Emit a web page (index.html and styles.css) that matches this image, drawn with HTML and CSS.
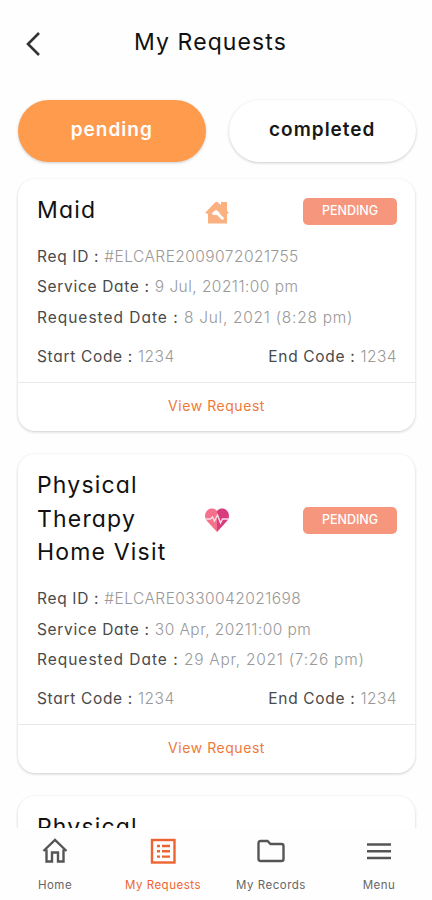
FILE: index.html
```html
<!DOCTYPE html>
<html lang="en">
<head>
  <meta charset="UTF-8" />
  <meta name="viewport" content="width=device-width, initial-scale=1.0" />
  <title>My Requests</title>
  <link rel="stylesheet" href="styles.css">
</head>
<body>
  <header class="header">
    <svg class="back" width="16" height="26" viewBox="0 0 16 26"><path d="M14 2 3 13 14 24" /></svg>
    <h1>My Requests</h1>
  </header>

  <div class="tabs">
    <button class="tab active">pending</button>
    <button class="tab">completed</button>
  </div>

  <main class="list">
    <div class="card">
      <div class="card-head">
        <h2>Maid</h2>
        <svg width="26" height="26" viewBox="0 0 26 26">
          <path fill="#fbb080" d="M1 14 11 3.5q1.500-1.500 3 0L17 6V3h6v9l2 2-2 1v9.500H4V15Z" />
          <path fill="#fff" d="M9 13l3-2 3 2 1 2 4 4-1 2-2-1-4-4H9l-1-2Z" />
        </svg>
        <span class="badge">PENDING</span>
      </div>
      <p>Req ID : <span>#ELCARE2009072021755</span></p>
      <p>Service Date : <span>9 Jul, 20211:00 pm</span></p>
      <p class="requested">Requested Date : <span>8 Jul, 2021 (8:28 pm)</span></p>
      <div class="codes">
        <p>Start Code : <span>1234</span></p>
        <p>End Code : <span>1234</span></p>
      </div>
      <a class="view" href="#">View Request</a>
    </div>

    <div class="card">
      <div class="card-head">
        <h2>Physical Therapy Home Visit</h2>
        <svg width="26" height="26" viewBox="0 0 26 26">
          <path fill="#f5708a" d="M13 25 3 14C-3 7 6-3 13 4Z" />
          <path fill="#d83c7c" d="M13 25 23 14C29 7 20-3 13 4Z" />
          <path fill="none" stroke="#f9dce6" stroke-width="1.500" d="M1.500 12h5l2-2 2 4 3-6 3 8 2-4h6" />
        </svg>
        <span class="badge">PENDING</span>
      </div>
      <p>Req ID : <span>#ELCARE0330042021698</span></p>
      <p>Service Date : <span>30 Apr, 20211:00 pm</span></p>
      <p class="requested">Requested Date : <span>29 Apr, 2021 (7:26 pm)</span></p>
      <div class="codes">
        <p>Start Code : <span>1234</span></p>
        <p>End Code : <span>1234</span></p>
      </div>
      <a class="view" href="#">View Request</a>
    </div>

    <div class="card">
      <div class="card-head">
        <h2>Physical</h2>
      </div>
    </div>
  </main>

  <nav class="nav">
    <a href="#">
      <svg width="28" height="28" viewBox="0 0 28 28"><path d="M2.500 14 14 3 25.500 14M5.500 12.500V24.500H11V15.500H17V24.500H22.500V12.500" /></svg>
      Home
    </a>
    <a href="#" class="active">
      <svg width="28" height="28" viewBox="0 0 28 28">
        <rect x="3" y="3" width="22.500" height="22.500" />
        <path d="M8 9h3M13 9h8M8 14.300h3M13 14.300h8M8 19.600h3M13 19.600h8" />
      </svg>
      My Requests
    </a>
    <a href="#">
      <svg width="28" height="28" viewBox="0 0 28 28"><path d="M1.500 6Q1.500 4 3.500 4H10.500L13.500 7H24.500Q26.500 7 26.500 9V22Q26.500 24 24.500 24H3.500Q1.500 24 1.500 22Z" /></svg>
      My Records
    </a>
    <a href="#">
      <svg width="28" height="28" viewBox="0 0 28 28"><path d="M2 7.500H26M2 14.200H26M2 21H26" /></svg>
      Menu
    </a>
  </nav>
</body>
</html>
```

FILE: styles.css
```css
* {
  box-sizing: border-box;
}
body {
  margin: 0;
  height: 900px;
  display: flex;
  flex-direction: column;
  overflow: hidden;
  background-color: #fefefe;
  color: #111;
  font-family: Inter, "Open Sans", sans-serif;
  font-feature-settings: "cv11";
}
h1, h2, p {
  margin: 0;
  font-weight: 400;
}
svg {
  display: block;
}
.header {
  display: flex;
  align-items: center;
  height: 88px;
  padding-left: 25px;
}
.back {
  fill: none;
  stroke: #333;
  stroke-width: 2.6;
}
h1 {
  width: 153px;
  margin-left: 93px;
  font-size: 23px;
  letter-spacing: 1.100px;
  white-space: nowrap;
  padding-bottom: 4px;
}
.tabs {
  display: flex;
  gap: 23px;
  padding: 12px 16px 0 18px;
}
.tab {
  flex: 1;
  height: 62px;
  padding: 0 0 4px;
  border: 0;
  border-radius: 31px;
  background-color: #fff;
  color: #181818;
  font: 600 19px Inter, sans-serif;
  font-feature-settings: "cv11";
  letter-spacing: 1px;
  box-shadow: 0 1px 3px rgba(0, 0, 0, 0.2);
}
.tab.active {
  background-color: #ff9b4d;
  color: #fff;
}
.list {
  flex: 1;
  min-height: 0;
  overflow: hidden;
  padding: 17px 17px 0 18px;
}
.card {
  margin-bottom: 23px;
  padding-top: 15px;
  border-radius: 17px;
  background-color: #fff;
  box-shadow: 0 1px 3px rgba(0, 0, 0, 0.2);
}
.card-head {
  display: grid;
  grid-template-columns: 136px 1fr 136px;
  align-items: center;
  justify-items: center;
  padding: 0 18px 0 19px;
  margin-bottom: 14px;
}
.card-head svg {
  margin-top: 2px;
}
h2 {
  justify-self: start;
  font-size: 23px;
  line-height: 33.500px;
  letter-spacing: 1.180px;
}
.badge {
  justify-self: end;
  width: 94px;
  height: 27px;
  margin-top: 2px;
  border-radius: 5px;
  background-color: #f6967c;
  color: #fff;
  font-size: 12.500px;
  font-weight: 500;
  line-height: 26px;
  text-align: center;
}
p {
  padding-left: 19px;
  color: #4a4a4a;
  font-size: 15.500px;
  line-height: 30.900px;
  letter-spacing: 0.680px;
  white-space: nowrap;
}
p span {
  color: #999;
  font-weight: 300;
  letter-spacing: 0.450px;
}
.requested {
  letter-spacing: 0.980px;
}
.requested span {
  letter-spacing: 0.720px;
}
.codes {
  display: flex;
  justify-content: space-between;
  padding-right: 18px;
  margin: 8px 0 9px;
}
.view {
  display: block;
  height: 49px;
  border-top: 1px solid #e8e8e8;
  color: #ee7a3a;
  font-size: 14px;
  line-height: 46px;
  letter-spacing: 0.550px;
  text-align: center;
  text-decoration: none;
}
.nav {
  display: grid;
  grid-template-columns: repeat(4, 108px);
  height: 72px;
  padding: 9px 0 0 1px;
}
.nav a {
  display: flex;
  flex-direction: column;
  align-items: center;
  gap: 12px;
  color: #666;
  font-size: 11.500px;
  line-height: 16px;
  letter-spacing: 0.500px;
  text-decoration: none;
}
.nav svg {
  fill: none;
  stroke: #555;
  stroke-width: 2.4;
}
.nav .active {
  color: #ee6430;
}
.nav .active svg {
  stroke: #ee6430;
}
```
